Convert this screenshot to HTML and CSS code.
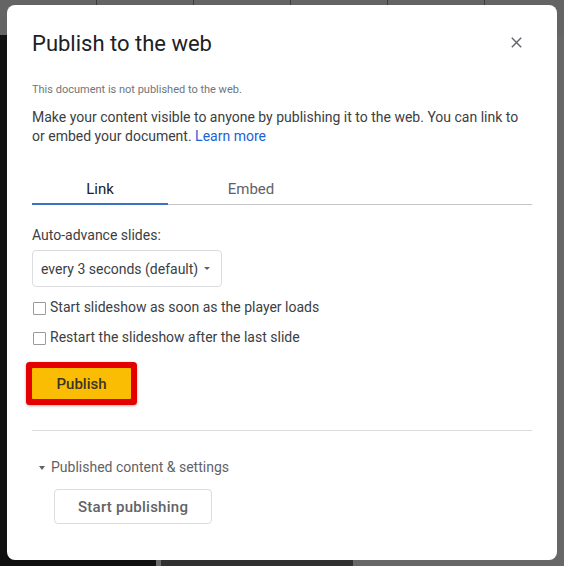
FILE: index.html
```html
<!DOCTYPE html>
<html lang="en">
<head>
<meta charset="utf-8">
<title>Publish to the web</title>
<link rel="stylesheet" href="styles.css">
</head>
<body>
<div class="dialog" role="dialog" aria-label="Publish to the web">
  <div class="header">
    <h1 class="title">Publish to the web</h1>
    <button class="close" aria-label="Close">
      <svg width="11" height="11" viewBox="0 0 11 11"><path d="M0.8 0.8 L10.2 10.2 M10.2 0.8 L0.8 10.2" stroke="#5f6368" stroke-width="1.4" fill="none"/></svg>
    </button>
  </div>
  <p class="status">This document is not published to the web.</p>
  <p class="intro">Make your content visible to anyone by publishing it to the web. You can link to or embed your document. <a class="learn" href="#">Learn more</a></p>
  <div class="tabs">
    <div class="tab tab-link active">Link</div>
    <div class="tab tab-embed">Embed</div>
  </div>
  <div class="label">Auto-advance slides:</div>
  <div class="select"><span>every 3 seconds (default)</span><span class="caret"></span></div>
  <label class="check"><span class="box"></span>Start slideshow as soon as the player loads</label>
  <label class="check check-second"><span class="box"></span>Restart the slideshow after the last slide</label>
  <button class="publish">Publish</button>
  <div class="divider"></div>
  <div class="section"><span class="tri"></span>Published content &amp; settings</div>
  <button class="start">Start publishing</button>
</div>
</body>
</html>
```
FILE: styles.css
```css
html, body {
  margin: 0;
  padding: 0;
}
body {
  width: 564px;
  height: 566px;
  overflow: hidden;
  position: relative;
  font-family: Roboto, "Liberation Sans", Arial, sans-serif;
  background:
    repeating-linear-gradient(to right, transparent 0 96px, #3c3c3c 96px 97px) 0 0 / 100% 5px no-repeat,
    linear-gradient(to bottom, #646464 0 35px, transparent 35px),
    linear-gradient(to right, #111111 0 156px, #6a6a6a 156px 161px, #303030 161px 353px, #676767 353px);
}
.dialog {
  position: absolute;
  left: 7px;
  top: 5px;
  width: 550px;
  height: 555px;
  box-sizing: border-box;
  padding: 25px 25px 0;
  background: #ffffff;
  border-radius: 8px;
  display: flex;
  flex-direction: column;
  align-items: flex-start;
}
.header {
  align-self: stretch;
  display: flex;
  align-items: center;
  justify-content: space-between;
  height: 28px;
}
.title {
  margin: 0;
  font-size: 22px;
  line-height: 28px;
  font-weight: 400;
  color: #202124;
}
.close {
  width: 24px;
  height: 24px;
  margin: 0 4px 3px 0;
  padding: 0;
  border: none;
  background: transparent;
  display: flex;
  align-items: center;
  justify-content: center;
}
.status {
  margin: 24px 0 0;
  font-size: 11px;
  line-height: 16px;
  color: #70757a;
}
.intro {
  margin: 10px 0 0;
  font-size: 14px;
  line-height: 19px;
  color: #3c4043;
}
.learn {
  color: #1a62d6;
  text-decoration: none;
}
.tabs {
  align-self: stretch;
  margin-top: 33px;
  display: flex;
  border-bottom: 1px solid #c4c4c4;
}
.tab {
  font-size: 15px;
  line-height: 20px;
  padding-bottom: 4px;
  border-bottom: 2px solid transparent;
  margin-bottom: -1px;
  text-align: center;
  color: #5f6368;
}
.tab-link {
  width: 136px;
}
.tab-embed {
  width: 166px;
}
.tab.active {
  color: #202124;
  border-bottom-color: #3b72c4;
}
.label {
  margin-top: 20px;
  font-size: 14px;
  line-height: 20px;
  color: #3c4043;
}
.select {
  margin-top: 5px;
  height: 37px;
  box-sizing: border-box;
  border: 1px solid #dadce0;
  border-radius: 4px;
  padding: 0 11px 0 8px;
  display: flex;
  align-items: center;
  gap: 6px;
  font-size: 14px;
  line-height: 20px;
  color: #3c4043;
}
.caret {
  width: 0;
  height: 0;
  border-left: 3px solid transparent;
  border-right: 3px solid transparent;
  border-top: 3.5px solid #5f6368;
}
.check {
  margin-top: 10px;
  display: flex;
  align-items: flex-start;
  font-size: 14px;
  line-height: 20px;
  color: #3c4043;
}
.box {
  width: 13px;
  height: 13px;
  box-sizing: border-box;
  border: 1px solid #9a9a9a;
  border-radius: 1px;
  margin: 5px 4px 0 1px;
  background: #ffffff;
}
.publish {
  margin-top: 21px;
  width: 99px;
  height: 31px;
  padding: 1px 0 0;
  border: none;
  border-radius: 1px;
  background: #fbbc04;
  font-family: inherit;
  font-size: 15px;
  font-weight: 500;
  color: #3a3528;
  box-shadow: 0 0 0 6px #e50000, 0 1px 3px 6px rgba(0, 0, 0, 0.3);
}
.divider {
  align-self: stretch;
  margin-top: 31px;
  height: 1px;
  background: #dadce0;
}
.section {
  margin-top: 26px;
  display: flex;
  align-items: center;
  font-size: 14px;
  line-height: 20px;
  color: #5f6368;
}
.tri {
  width: 0;
  height: 0;
  border-left: 3.5px solid transparent;
  border-right: 3.5px solid transparent;
  border-top: 4px solid #5f6368;
  margin: 1px 6px 0 7px;
}
.start {
  margin: 12px 0 0 22px;
  height: 35px;
  padding: 0 23px;
  box-sizing: border-box;
  border: 1px solid #dadce0;
  border-radius: 4px;
  background: #ffffff;
  font-family: inherit;
  font-size: 15px;
  font-weight: 500;
  letter-spacing: 0.25px;
  color: #5f6368;
}
```
